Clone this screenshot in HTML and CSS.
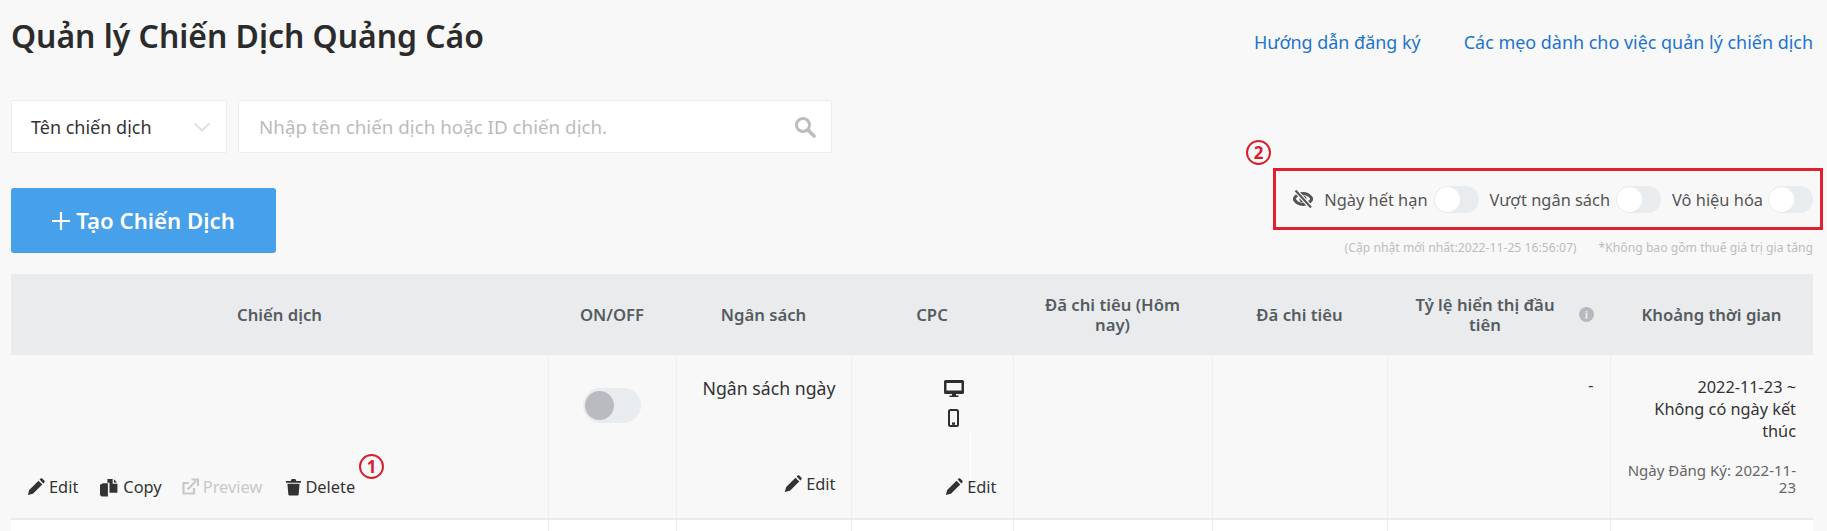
FILE: index.html
```html
<!DOCTYPE html>
<html lang="vi">
<head>
<meta charset="utf-8">
<title>Quản lý Chiến Dịch Quảng Cáo</title>
<link rel="stylesheet" href="styles.css">
</head>
<body>
<svg class="defs" width="0" height="0" aria-hidden="true">
  <symbol id="pencil" viewBox="0 0 20 20"><path d="M1 19l1.400-5.600L12.800 3l4.200 4.200L6.600 17.600 1 19zM14 1.800l1-1c.6-.6 1.500-.6 2.100 0l2.100 2.100c.6.6.6 1.500 0 2.100l-1 1L14 1.800z" fill="currentColor"/></symbol>
</svg>
<main class="page">
  <header class="top">
    <h1 class="title">Quản lý Chiến Dịch Quảng Cáo</h1>
    <nav class="links">
      <a class="link">Hướng dẫn đăng ký</a>
      <a class="link">Các mẹo dành cho việc quản lý chiến dịch</a>
    </nav>
  </header>

  <div class="search">
    <div class="select">
      <span>Tên chiến dịch</span>
      <svg class="chev" width="18" height="10" viewBox="0 0 18 10"><path d="M1.500 1.500L9 8.500l7.500-7" fill="none" stroke="#dfdfdf" stroke-width="1.800"/></svg>
    </div>
    <div class="input">
      <span>Nhập tên chiến dịch hoặc ID chiến dịch.</span>
      <svg width="22" height="22" viewBox="0 0 22 22"><circle cx="9" cy="9" r="6.500" fill="none" stroke="#bdbdbd" stroke-width="3"/><path d="M14 14l6 6" stroke="#bdbdbd" stroke-width="3.600" stroke-linecap="round"/></svg>
    </div>
  </div>

  <div class="actions">
    <button class="create"><svg width="18" height="18" viewBox="0 0 18 18"><path d="M9 0v18M0 9h18" stroke="#fff" stroke-width="2.200"/></svg>Tạo Chiến Dịch</button>
    <div class="filters-wrap">
      <span class="mark mark-two">2</span>
      <div class="filters">
        <svg class="eye" width="20" height="20" viewBox="0 0 20 20"><path d="M1 10c2-3.600 5-5.400 9-5.400s7 1.800 9 5.400c-2 3.600-5 5.400-9 5.400S3 13.600 1 10z" fill="none" stroke="#555" stroke-width="3"/><circle cx="10" cy="10" r="3.500" fill="#555"/><path d="M2.500 1.500L18 18.500" stroke="#f8f8f8" stroke-width="4.400"/><path d="M2.500 1.500L18 18.500" stroke="#555" stroke-width="2"/></svg>
        <span class="flabel">Ngày hết hạn</span><span class="toggle"></span>
        <span class="flabel">Vượt ngân sách</span><span class="toggle"></span>
        <span class="flabel flabel-last">Vô hiệu hóa</span><span class="toggle"></span>
      </div>
    </div>
  </div>

  <div class="notes">
    <span>(Cập nhật mới nhất:2022-11-25 16:56:07)</span>
    <span>*Không bao gồm thuế giá trị gia tăng</span>
  </div>

  <table class="grid">
    <colgroup>
      <col class="c1"><col class="c2"><col class="c3"><col class="c4"><col class="c5"><col class="c6"><col class="c7"><col class="c8">
    </colgroup>
    <thead>
      <tr>
        <th>Chiến dịch</th>
        <th>ON/OFF</th>
        <th>Ngân sách</th>
        <th>CPC</th>
        <th>Đã chi tiêu (Hôm nay)</th>
        <th>Đã chi tiêu</th>
        <th class="rate"><div class="rate-in"><span>Tỷ lệ hiển thị đầu tiên</span><i class="info">i</i></div></th>
        <th>Khoảng thời gian</th>
      </tr>
    </thead>
    <tbody>
      <tr class="row">
        <td class="campaign">
          <div class="ops">
            <span class="op"><svg width="18" height="18"><use href="#pencil"/></svg>Edit</span>
            <span class="op"><svg width="19" height="19" viewBox="0 0 18 18"><path d="M0 6.500l3-1.500h4.500v12.500H2c-1 0-2-1-2-2V6.500zM7 1h5v4.500h4.500V14H9V4.500H7V1zM13.200 1.200l3 3h-3v-3z" fill="currentColor"/></svg>Copy</span>
            <span class="op op-off"><svg width="18" height="18" viewBox="0 0 18 18"><path d="M13 10v5.500H2.500V5H8" fill="none" stroke="currentColor" stroke-width="2.200"/><path d="M6.500 11.500L15 3M10.500 1.500h6.500V8" fill="none" stroke="currentColor" stroke-width="2.200"/></svg>Preview</span>
            <span class="op op-del"><svg width="15" height="18" viewBox="0 0 16 18"><path d="M0 2.500h5l1-2h4l1 2h5v2H0v-2zM1.500 5.500h13l-1 11.500c0 .5-.5 1-1 1h-9c-.5 0-1-.5-1-1l-1-11.500z" fill="currentColor"/></svg>Delete<span class="mark mark-one">1</span></span>
          </div>
        </td>
        <td class="onoff"><span class="toggle toggle-row"></span></td>
        <td class="budget">
          <div>Ngân sách ngày</div>
          <span class="op op-end"><svg width="18" height="18"><use href="#pencil"/></svg>Edit</span>
        </td>
        <td class="cpc">
          <div class="devices">
            <svg width="20" height="17" viewBox="0 0 20 17"><path d="M1.500 0h17A1.500 1.500 0 0 1 20 1.500V12.500a1.500 1.500 0 0 1-1.500 1.500H12v1.500h2.500V17h-9v-1.500H8V14H1.500A1.500 1.500 0 0 1 0 12.500V1.500A1.500 1.500 0 0 1 1.500 0zM2.500 3v7.500h15V3h-15z" fill="#2f2f2f" fill-rule="evenodd"/></svg>
            <svg width="11" height="18" viewBox="0 0 11 18"><rect x="1" y="1" width="9" height="16" rx="1.500" fill="none" stroke="#2f2f2f" stroke-width="2"/><rect x="4" y="13.400" width="3" height="2.400" fill="#2f2f2f"/></svg>
          </div>
          <span class="op op-end"><svg width="18" height="18"><use href="#pencil"/></svg>Edit</span>
        </td>
        <td></td>
        <td></td>
        <td class="dash">-</td>
        <td class="period">
          <div>2022-11-23 ~<br>Không có ngày kết thúc</div>
          <div class="reg">Ngày Đăng Ký: 2022-11-23</div>
        </td>
      </tr>
      <tr class="next">
        <td></td><td></td><td></td><td></td><td></td><td></td><td></td><td></td>
      </tr>
    </tbody>
  </table>
</main>
</body>
</html>
```
FILE: styles.css
```css
* { box-sizing: border-box; }
html, body { margin: 0; height: 531px; overflow: hidden; }
body {
  background: #f8f8f8;
  color: #333;
  font-family: "Noto Sans", "Open Sans", sans-serif;
  font-size: 16px;
}
.defs { position: absolute; }
.page { padding: 0 14px 0 11px; }

.top { display: flex; justify-content: space-between; height: 100px; }
.title {
  margin: 13px 0 0;
  font-size: 31.900px;
  line-height: 46px;
  font-weight: 600;
  color: #2b2b2b;
  height: 46px;
}
.links { display: flex; gap: 43px; padding-top: 29px; }
.link { color: #1e73cf; font-size: 17.950px; line-height: 26px; }

.search { display: flex; gap: 11px; }
.select, .input {
  display: flex;
  align-items: center;
  justify-content: space-between;
  height: 53px;
  background: #fff;
  border: 1px solid #ececec;
  border-radius: 2px;
  font-size: 18px;
}
.select { width: 216px; padding: 0 15px 0 19px; color: #333; }
.input { width: 594px; padding: 0 15px 0 20px; color: #bbb; font-size: 18.800px; }

.actions { display: flex; justify-content: space-between; align-items: flex-end; margin-top: 35px; height: 65px; }
.create {
  display: flex;
  align-items: center;
  justify-content: center;
  gap: 6px;
  width: 265px;
  height: 65px;
  padding: 0;
  background: #47a1ea;
  border: 0;
  border-radius: 3px;
  color: #fff;
  font: 600 22.200px "Noto Sans", sans-serif;
}
.filters-wrap { position: relative; margin-right: -10px; margin-bottom: 23px; }
.filters {
  display: flex;
  align-items: center;
  justify-content: flex-end;
  width: 550px;
  height: 62px;
  padding-right: 7px;
  border: 3px solid #e0202e;
  color: #555;
  font-size: 16.400px;
}
.eye { margin-right: 11px; }
.flabel { white-space: nowrap; margin-right: 6px; }
.flabel-last { margin-right: 5px; }
.toggle {
  display: block;
  flex: none;
  position: relative;
  width: 45px;
  height: 27px;
  margin-right: 11px;
  border-radius: 14px;
  background: #e9ecee;
}
.toggle::after {
  content: "";
  position: absolute;
  left: 1px;
  top: 1px;
  width: 25px;
  height: 25px;
  border-radius: 50%;
  background: #fff;
}
.filters .toggle:last-child { margin-right: 0; }
.toggle-row { width: 58px; height: 35px; margin: 0 auto; border-radius: 18px; background: #e9ecee; }
.toggle-row::after { left: 2px; top: 3px; width: 29px; height: 29px; background: #b9bbc1; }

.mark {
  position: absolute;
  display: flex;
  align-items: center;
  justify-content: center;
  border: 2px solid #d81f2c;
  border-radius: 50%;
  color: #d81f2c;
  font-weight: 700;
  font-size: 17px;
  line-height: 1;
  width: 25px;
  height: 25px;
}
.mark-two { left: -27px; top: -28px; }
.mark-one { right: -29px; top: -21px; }

.notes {
  display: flex;
  justify-content: flex-end;
  gap: 22px;
  height: 21px;
  margin-top: -16px;
  color: #bdbdbd;
  font-size: 12.200px;
  line-height: 21px;
}

.grid {
  table-layout: fixed;
  border-collapse: collapse;
  width: 1802px;
  margin-top: 16px;
}
.c1 { width: 537px; }
.c2 { width: 128px; }
.c3 { width: 175px; }
.c4 { width: 162px; }
.c5 { width: 199px; }
.c6 { width: 175px; }
.c7 { width: 223px; }
.c8 { width: 203px; }
.grid th {
  height: 81px;
  padding: 0 16px;
  background: #e9ebed;
  color: #555b60;
  font-size: 16.700px;
  font-weight: 600;
  line-height: 20px;
  text-align: center;
}
.rate-in { display: flex; align-items: center; justify-content: center; gap: 12px; }
.rate-in span { flex: 1; }
.info {
  flex: none;
  width: 15px;
  height: 15px;
  border-radius: 50%;
  background: #b5b9bd;
  color: #e9ebed;
  font: 700 11px/15px "Noto Sans", sans-serif;
  text-align: center;
}
.grid td {
  border-left: 1px solid #eee;
  vertical-align: top;
  padding: 0;
  text-align: right;
}
.grid td:first-child { border-left: 0; }
.row td { height: 164px; border-bottom: 2px solid #e9ebed; }
.next td { height: 13px; background: #fff; }

.op { display: inline-flex; align-items: center; gap: 4px; font-size: 16.400px; line-height: 24px; }
.op svg { color: #333; flex: none; }
.op-off, .op-off svg { color: #c8c8c8; }
.op-off { margin: 0 2px 0 -3px; }
.op-del { position: relative; }

.ops { display: flex; gap: 22px; padding: 120px 0 0 16px; }
.onoff { padding-top: 33px !important; text-align: center !important; }
.budget, .cpc { position: relative; }
.budget { padding: 20px 15px 0 0 !important; font-size: 17.700px; line-height: 26px; }
.budget .op { position: absolute; right: 15px; top: 117px; }
.cpc .op { position: absolute; right: 16px; top: 120px; }
.cpc::after { content: ""; position: absolute; left: 118px; top: 75px; width: 1px; height: 50px; background: #fff; }
.devices { display: flex; flex-direction: column; align-items: center; gap: 12px; padding: 25px 0 0 43px; }
.dash { padding: 19px 16px 0 0 !important; font-size: 16px; }
.period { padding: 21px 17px 0 16px !important; font-size: 16.300px; line-height: 22px; }
.reg { margin-top: 20px; font-size: 15px; line-height: 17px; color: #666; }
```
